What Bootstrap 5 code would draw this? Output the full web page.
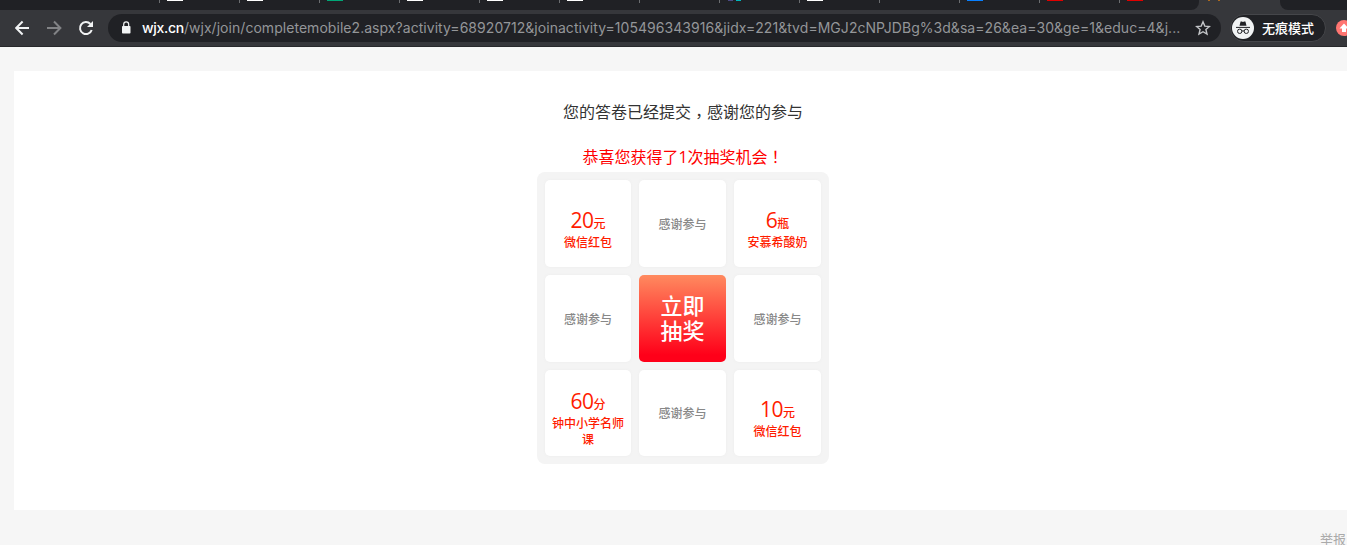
<!DOCTYPE html>
<html lang="zh-CN">
<head>
    <meta charset="UTF-8">
    <title>抽奖</title>
    <meta name="viewport" content="width=device-width, initial-scale=1">
    <link href="https://cdn.jsdelivr.net/npm/bootstrap@5.3.0/dist/css/bootstrap.min.css" rel="stylesheet">
    <style>
        body { height: 545px; background: #f6f6f6; color: #333; font-family: "Open Sans", "Noto Sans CJK SC", sans-serif; }
        svg { display: block; flex: none; }

        /* browser bar */
        .tab-strip { height: 10px; background: #202125; }
        .tab-item { flex: 0 0 80px; height: 10px; padding-left: 7px; position: relative; }
        .tab-item::before { content: ""; position: absolute; left: -1px; top: 0; width: 1px; height: 3px; background: #6b6d70; }
        .tab-item i { display: block; width: 16px; height: 1px; }
        .tab-active { flex: 0 0 81px; background: #36373b; padding-left: 9px; }
        .tab-active::before { display: none; }
        .tab-end { background: #202125; border-bottom-left-radius: 8px; }
        .tab-before { flex: 0 0 79px; border-bottom-right-radius: 8px; background: #202125; }
        .tab-wrap { background: #36373b; }
        .toolbar { height: 37px; background: #36373b; border-bottom: 1px solid #27282b; padding: 0 0 1px 15px; }
        .omnibox { width: 1113px; height: 28px; background: #202125; margin-left: 14px; padding: 0 10px 0 13px; }
        .url { width: 1048px; margin-left: 11px; color: #949699; font: 14px/28px Inter, sans-serif; letter-spacing: .043px; }
        .url b { font-weight: 500; color: #fff; letter-spacing: -.3px; }
        .incognito { width: 96px; height: 28px; border: 1px solid #45464a; background: #202125; margin-left: 9px; padding-left: 1px; color: #fff; font: 500 13px/26px "Noto Sans CJK SC", sans-serif; }

        /* survey page */
        .panel { margin: 24px 0 0 14px; height: 439px; width: 1338px; background: #fff; padding-top: 29px; }
        .done-msg { height: 24px; font-size: 16px; line-height: 24px; margin-bottom: 21px; }
        .win-msg { height: 24px; font-size: 16px; line-height: 24px; color: #f00; margin-bottom: 3px; }
        .punct { font-family: "Noto Sans CJK TC", sans-serif; line-height: 1; }
        .done-msg .punct { vertical-align: -4px; }
        .prize-grid { width: 292px; height: 292px; background: #f4f4f4; border-radius: 8px; padding: 8px; display: grid; grid-template: 87px 87px 86px / 86px 87px 87px; gap: 8px; }
        .prize { background: #fff; border-radius: 5px; color: #ff1c00; font-size: 12px; font-weight: 500; line-height: 16px; padding: 0 6px; box-shadow: 0 0 3px #ececec; }
        .prize-none { color: #888; padding-top: 2px; }
        .prize-num { font-size: 21px; line-height: 23px; letter-spacing: -.5px; }
        .prize-num span { font-size: 12px; letter-spacing: 0; }
        .prize-low { padding-top: 12px; }
        .draw-btn { border: 0; border-radius: 5px; padding: 0 0 3px; color: #fff; font: 500 22px/25px "Noto Sans CJK SC", sans-serif; background: linear-gradient(#ff8a5f, #ff0019 92%); }
        .report { color: #aaa; font-size: 13px; line-height: 16px; margin-top: 21px; padding-right: 1px; }
    </style>
</head>
<body class="overflow-hidden">
    <header class="overflow-hidden">
        <div class="tab-wrap d-flex">
            <div class="tab-strip" style="flex: 0 0 160px"></div>
            <div class="tab-strip d-flex" id="tabs"></div>
            <div class="tab-before tab-item"><i style="background: #e00000"></i></div>
            <div class="tab-item tab-active d-flex gap-2"><i style="width: 2px; background: #ad691c"></i><i style="width: 2px; background: #ad691c"></i></div>
            <div class="tab-end flex-grow-1"></div>
        </div>
        <div class="toolbar d-flex align-items-center">
            <svg width="15" height="16" viewBox="0 0 15 16" fill="none" stroke="#f1f3f4" stroke-width="2"><path d="M14 8H1.7M7.6 1.5 1.2 8l6.4 6.5"/></svg>
            <svg class="ms-3" width="16" height="16" viewBox="0 0 16 16" fill="none" stroke="#828386" stroke-width="2"><path d="M1 8h12.7M8 1.5 14.4 8 8 14.5"/></svg>
            <svg class="ms-3" width="16" height="16" viewBox="0 0 16 16" fill="none" stroke="#f1f3f4" stroke-width="2"><path d="M13.7 10A6 6 0 1 1 12.4 4"/><path d="M15 1v6H9z" fill="#f1f3f4" stroke="none"/></svg>
            <div class="omnibox rounded-pill d-flex align-items-center flex-shrink-0">
                <svg width="10" height="14" viewBox="0 0 10 14"><rect x="1" y="5" width="8.5" height="7.5" rx=".8" fill="#f1f3f4"/><path d="M2.7 5.5V3.4a2.5 2.5 0 0 1 5 0v2.1" fill="none" stroke="#f1f3f4" stroke-width="1.2"/></svg>
                <div class="url text-nowrap"><b>wjx.cn</b>/wjx/join/completemobile2.aspx?activity=68920712&amp;joinactivity=105496343916&amp;jidx=221&amp;tvd=MGJ2cNPJDBg%3d&amp;sa=26&amp;ea=30&amp;ge=1&amp;educ=4&amp;j...</div>
                <svg class="ms-auto" width="16" height="16" viewBox="0 0 16 16" fill="none" stroke="#c4c6c9" stroke-width="1.4"><path d="m8 1.8 1.8 4.3 4.6.4-3.5 3 1.1 4.6L8 11.7l-4 2.4 1.1-4.6-3.5-3 4.6-.4z"/></svg>
            </div>
            <div class="incognito rounded-pill d-flex align-items-center flex-shrink-0">
                <svg width="22" height="22" viewBox="0 0 22 22"><circle cx="11" cy="11" r="11" fill="#f1f3f4"/><path d="M7.5 8.7 8.6 4.6h1.2l1.2.5 1.2-.5h1.2l1.1 4.1z" fill="#202125"/><path d="M4 10.4h14M9.7 14.2q1.3-.8 2.6 0" fill="none" stroke="#202125"/><rect x="5.6" y="12.2" width="4.2" height="4.2" rx="1.8" fill="none" stroke="#202125"/><rect x="12.2" y="12.2" width="4.2" height="4.2" rx="1.8" fill="none" stroke="#202125"/></svg>
                <span style="margin-left: 8px">无痕模式</span>
            </div>
            <svg style="margin-left: 10px" width="16" height="16" viewBox="0 0 16 16"><circle cx="8" cy="8" r="8" fill="#ff7571"/><path d="m8 3.5 4.5 5H10V12H6V8.5H3.5z" fill="#fff"/></svg>
        </div>
    </header>

    <main class="panel d-flex flex-column align-items-center">
        <div class="done-msg text-nowrap">您的答卷已经提交<span class="punct" lang="zh-TW">，</span>感谢您的参与</div>
        <div class="win-msg text-nowrap">恭喜您获得了1次抽奖机会<span class="punct" lang="zh-TW">！</span></div>
        <div class="prize-grid text-center" id="prizes"></div>
    </main>
    <div class="report text-end">举报</div>

    <script src="https://cdn.jsdelivr.net/npm/bootstrap@5.3.0/dist/js/bootstrap.bundle.min.js"></script>
    <script>
    // favicon colours of the open tabs
    const tabs = ['#fff', '#fff', '#00a676', '#fff', '#fff', '#fff', 'none', 'linear-gradient(90deg, transparent 1px, #4b4a86 1px 6px, transparent 6px 9px, #00b8bd 9px 14px, transparent 14px)', '#fff', 'none', '#087fff', '#e00000'];
    document.getElementById('tabs').innerHTML = tabs.map(c => `<div class="tab-item"><i style="background: ${c}"></i></div>`).join('');

    const prizes = [
        { num: 20, unit: '元', name: '微信红包' }, null, { num: 6, unit: '瓶', name: '安慕希酸奶' },
        null, 'draw', null,
        { num: 60, unit: '分', name: '钟中小学名师课' }, null, { num: 10, unit: '元', name: '微信红包' }
    ];
    document.getElementById('prizes').innerHTML = prizes.map(p => {
        if (p === 'draw') return '<button class="draw-btn" type="button">立即<br>抽奖</button>';
        if (!p) return '<div class="prize prize-none d-flex align-items-center justify-content-center">感谢参与</div>';
        return `<div class="prize prize-low d-flex flex-column justify-content-center"><div class="prize-num">${p.num}<span>${p.unit}</span></div><div>${p.name}</div></div>`;
    }).join('');
    </script>
</body>
</html>
